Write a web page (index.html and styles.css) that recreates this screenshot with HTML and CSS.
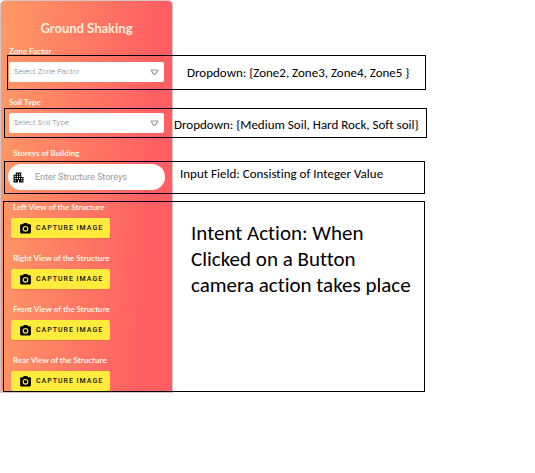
FILE: index.html
```html
<!DOCTYPE html>
<html lang="en">
<head>
<meta charset="utf-8">
<title>Ground Shaking</title>
<link rel="stylesheet" href="styles.css">
</head>
<body>
<svg class="defs" aria-hidden="true">
  <symbol id="camera" viewBox="0 0 24 24"><path fill-rule="evenodd" d="M9 2 7.2 4H4a2 2 0 0 0-2 2v13a2 2 0 0 0 2 2h16a2 2 0 0 0 2-2V6a2 2 0 0 0-2-2h-3.2L15 2H9Zm3 5.2a5.3 5.3 0 1 1 0 10.6 5.3 5.3 0 0 1 0-10.6Z"/><circle cx="12" cy="12.5" r="3.2"/></symbol>
  <symbol id="arrow" viewBox="0 0 9 7"><path d="M1.2 1h6.6L6.3 4 4.5 5.6 2.7 4Z" fill="none" stroke="#999" stroke-width="1.2" stroke-linejoin="round"/></symbol>
</svg>
<main class="board">
  <form class="card">
    <h1 class="title">Ground Shaking</h1>
    <div class="field">
      <label class="label" for="zone">Zone Factor</label>
      <div class="picker">
        <select id="zone"><option>Select Zone Factor</option><option>Zone2</option><option>Zone3</option><option>Zone4</option><option>Zone5</option></select>
        <svg class="arrow" aria-hidden="true"><use href="#arrow"/></svg>
      </div>
    </div>
    <div class="field">
      <label class="label" for="soil">Soil Type</label>
      <div class="picker">
        <select id="soil"><option>Select Soil Type</option><option>Medium Soil</option><option>Hard Rock</option><option>Soft soil</option></select>
        <svg class="arrow" aria-hidden="true"><use href="#arrow"/></svg>
      </div>
    </div>
    <div class="field storeys">
      <label class="label inset" for="storeys">Storeys of Building</label>
      <div class="pill">
        <svg class="building" viewBox="2 2 20 20" aria-hidden="true"><path fill-rule="evenodd" d="M17 11V3H7v4H3v14h8v-4h2v4h8V11h-4ZM7 19H5v-2h2v2Zm0-4H5v-2h2v2Zm0-4H5V9h2v2Zm4 4H9v-2h2v2Zm0-4H9V9h2v2Zm0-4H9V5h2v2Zm4 8h-2v-2h2v2Zm0-4h-2V9h2v2Zm0-4h-2V5h2v2Zm4 12h-2v-2h2v2Zm0-4h-2v-2h2v2Z"/></svg>
        <input id="storeys" type="text" inputmode="numeric" placeholder="Enter Structure Storeys">
      </div>
    </div>
    <div class="view">
      <span class="label" id="left">Left View of the Structure</span>
      <button class="capture" type="button" aria-describedby="left"><svg aria-hidden="true"><use href="#camera"/></svg>CAPTURE IMAGE</button>
    </div>
    <div class="view">
      <span class="label" id="right">Right View of the Structure</span>
      <button class="capture" type="button" aria-describedby="right"><svg aria-hidden="true"><use href="#camera"/></svg>CAPTURE IMAGE</button>
    </div>
    <div class="view">
      <span class="label" id="front">Front View of the Structure</span>
      <button class="capture" type="button" aria-describedby="front"><svg aria-hidden="true"><use href="#camera"/></svg>CAPTURE IMAGE</button>
    </div>
    <div class="view">
      <span class="label" id="rear">Rear View of the Structure</span>
      <button class="capture" type="button" aria-describedby="rear"><svg aria-hidden="true"><use href="#camera"/></svg>CAPTURE IMAGE</button>
    </div>
  </form>
  <p class="note note-zone">Dropdown: {Zone2, Zone3, Zone4, Zone5 }</p>
  <p class="note note-soil">Dropdown: {Medium Soil, Hard Rock, Soft soil}</p>
  <p class="note note-storeys">Input Field: Consisting of Integer Value</p>
  <p class="note note-camera">Intent Action: When<br>Clicked on a Button<br>camera action takes place</p>
</main>
</body>
</html>
```
FILE: styles.css
```css
* { box-sizing: border-box; }
body {
  margin: 0;
  background: #fff;
  color: #000;
  font-family: Carlito, Lato, sans-serif;
}
.defs { position: absolute; width: 0; height: 0; }
.board { position: relative; }
.card {
  width: 100%;
  max-width: 173px;
  padding: 16px 8px 0;
  border: 1px solid #d8c4c4;
  border-bottom-width: 2px;
  border-radius: 5px 5px 0 0;
  background: linear-gradient(93deg, #ff9966, #ff5e62 85%);
}
.title {
  margin: 0 0 7px;
  color: #fff0dc;
  font: 700 13px/22px Lato, sans-serif;
  text-align: center;
}
.label {
  display: block;
  color: #fff4e6;
  font: 700 8px/10px Lato, sans-serif;
  white-space: nowrap;
}
.field { margin-bottom: 15px; }
.inset { padding-left: 4px; }
.picker { position: relative; margin-top: 6px; }
.picker select {
  display: block;
  appearance: none;
  width: 100%;
  height: 20px;
  padding: 0 20px 0 5px;
  border: 0;
  border-radius: 2px;
  background: #fff;
  color: #888;
  font: 300 8px/10px Roboto, sans-serif;
}
.arrow {
  position: absolute;
  top: 7px;
  right: 5px;
  width: 9px;
  height: 7px;
  pointer-events: none;
}
.storeys { margin-bottom: 12px; }
.pill {
  display: flex;
  align-items: center;
  gap: 11px;
  height: 26px;
  margin: 6px -1px 0;
  padding: 0 5px;
  border-radius: 13px;
  background: #fff;
}
.building { flex: none; width: 11px; height: 11px; }
.pill input {
  min-width: 0;
  flex: 1;
  padding: 0;
  border: 0;
  outline: 0;
  background: transparent;
  font: 400 9px/12px Roboto, sans-serif;
}
.pill input::placeholder { color: #999; opacity: 1; }
.view { padding-left: 2px; }
.view + .view { margin-top: 15px; }
.view .label { padding-left: 2px; }
.capture {
  display: flex;
  align-items: center;
  gap: 4px;
  height: 20px;
  margin-top: 6px;
  padding: 0 7px 0 8px;
  border: 0;
  border-radius: 2px;
  background: #ffeb3b;
  box-shadow: 0 1px 1px #c8703c88;
  color: #111;
  font: 500 7px/10px Roboto, sans-serif;
  letter-spacing: 1px;
  white-space: nowrap;
}
.capture svg { width: 13px; height: 13px; }
.note {
  position: absolute;
  margin: 0;
  border: 1px solid #000;
  font-size: 13px;
  line-height: 16px;
  font-variant-ligatures: none;
  white-space: nowrap;
  pointer-events: none;
}
.note-zone { left: 7px; top: 55px; width: 419px; height: 35px; padding: 9px 0 0 179px; }
.note-soil { left: 4px; top: 108px; width: 423px; height: 30px; padding: 8px 0 0 169px; }
.note-storeys { left: 4px; top: 161px; width: 421px; height: 33px; padding: 4px 0 0 175px; }
.note-camera {
  left: 3px;
  top: 201px;
  width: 422px;
  height: 191px;
  padding: 18px 0 0 187px;
  font-size: 21px;
  line-height: 26px;
}
```
